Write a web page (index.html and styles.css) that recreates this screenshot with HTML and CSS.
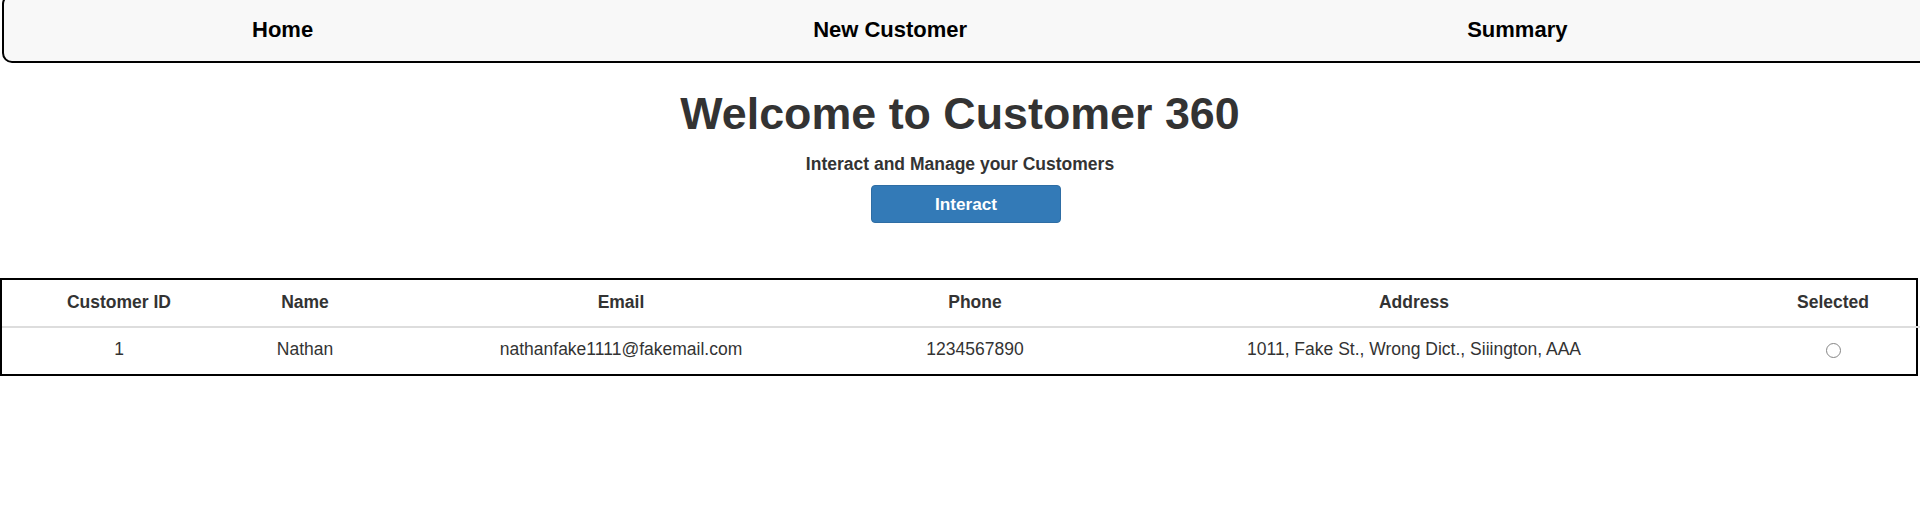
FILE: index.html
```html
<!DOCTYPE html>
<html lang="en">
<head>
<meta charset="utf-8">
<title>Customer 360</title>
<link rel="stylesheet" href="styles.css">
</head>
<body>
<nav class="navbar">
  <ul class="nav-list">
    <li><a class="nav-link" href="#">Home</a></li>
    <li><a class="nav-link" href="#">New Customer</a></li>
    <li><a class="nav-link" href="#">Summary</a></li>
  </ul>
</nav>

<header class="hero">
  <h1 class="hero-title">Welcome to Customer 360</h1>
  <p class="hero-sub">Interact and Manage your Customers</p>
  <button class="btn-primary" type="button">Interact</button>
</header>

<section class="table-wrap">
  <table class="customers">
    <colgroup>
      <col class="c-id">
      <col class="c-name">
      <col class="c-email">
      <col class="c-phone">
      <col class="c-address">
      <col class="c-selected">
    </colgroup>
    <thead>
      <tr>
        <th>Customer ID</th>
        <th>Name</th>
        <th>Email</th>
        <th>Phone</th>
        <th>Address</th>
        <th>Selected</th>
      </tr>
    </thead>
    <tbody>
      <tr>
        <td>1</td>
        <td>Nathan</td>
        <td>nathanfake1111@fakemail.com</td>
        <td>1234567890</td>
        <td>1011, Fake St., Wrong Dict., Siiington, AAA</td>
        <td><input class="radio" type="radio" name="sel"></td>
      </tr>
    </tbody>
  </table>
</section>
</body>
</html>
```

FILE: styles.css
```css
html, body {
  margin: 0;
  padding: 0;
  background: #ffffff;
  overflow: hidden;
}

body {
  font-family: "Liberation Sans", Arial, sans-serif;
  color: #333333;
}

.navbar {
  margin: -6px -20px 0 2px;
  background: #f8f8f8;
  border: 2px solid #000000;
  border-radius: 10px;
  padding: 21px 0 18px 248px;
}

.nav-list {
  list-style: none;
  margin: 0;
  padding: 0;
  display: flex;
  gap: 500px;
}

.nav-link {
  font-size: 22px;
  font-weight: bold;
  color: #000000;
  text-decoration: none;
  line-height: 26px;
  display: block;
}

.hero {
  text-align: center;
  padding-top: 25px;
}

.hero-title {
  margin: 0;
  font-size: 44.8px;
  font-weight: bold;
  line-height: 51px;
  color: #333333;
}

.hero-sub {
  margin: 15px 0 0;
  font-size: 17.5px;
  font-weight: bold;
  line-height: 20px;
  color: #333333;
}

.btn-primary {
  margin: 11px 0 0 12px;
  width: 190px;
  height: 38px;
  background: #337ab7;
  border: 1px solid #2e6da4;
  border-radius: 4px;
  color: #ffffff;
  font-family: "Liberation Sans", Arial, sans-serif;
  font-size: 17.2px;
  font-weight: bold;
  padding: 0;
}

.table-wrap {
  margin: 55px 2px 0 0;
  border: 2px solid #000000;
}

.customers {
  width: calc(100% + 4px);
  border-collapse: collapse;
  table-layout: fixed;
  font-size: 17.5px;
  color: #333333;
}

.c-id { width: 234px; }
.c-name { width: 138px; }
.c-email { width: 494px; }
.c-phone { width: 214px; }
.c-address { width: 664px; }

.customers th,
.customers td {
  padding: 0;
  text-align: center;
  vertical-align: middle;
}

.customers th {
  font-weight: bold;
  border-bottom: 2px solid #dddddd;
  height: 45px;
  padding-bottom: 1px;
}

.customers td {
  height: 43px;
  padding-bottom: 3px;
}

.radio {
  appearance: none;
  -webkit-appearance: none;
  box-sizing: border-box;
  width: 15px;
  height: 15px;
  margin: 0;
  border: 1.5px solid #858585;
  border-radius: 50%;
  background: #ffffff;
  vertical-align: middle;
}
```
